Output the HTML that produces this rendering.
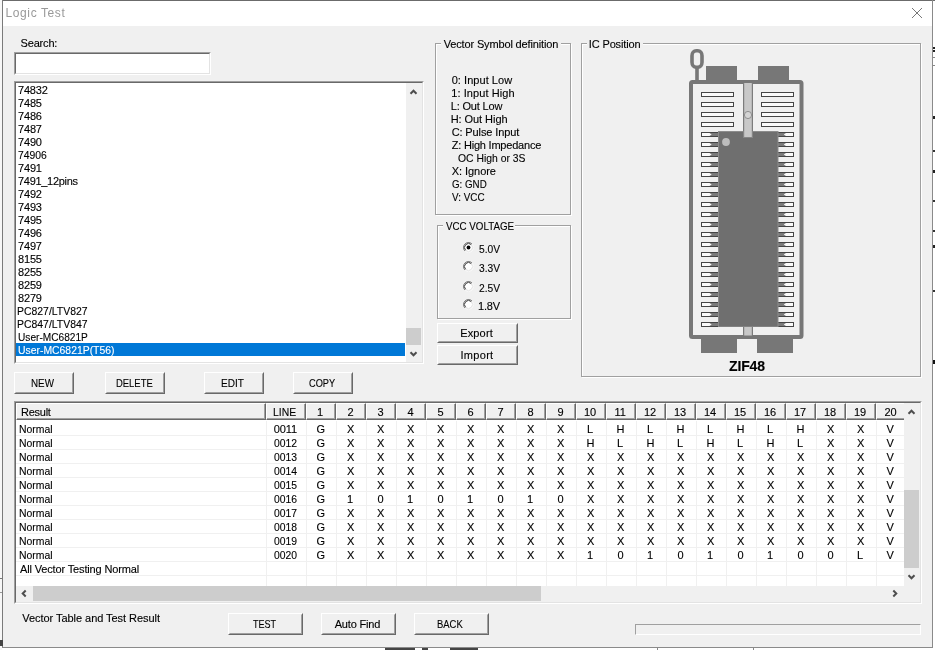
<!DOCTYPE html>
<html><head><meta charset="utf-8"><title>Logic Test</title><style>
html,body{margin:0;padding:0;}
body{width:935px;height:650px;overflow:hidden;background:#fff;position:relative;font-family:"Liberation Sans",sans-serif;font-size:11px;color:#000;-webkit-text-stroke:0.12px;}
div,span{position:absolute;box-sizing:border-box;white-space:nowrap;}
.btn{background:#f0f0f0;border-top:1px solid #fff;border-left:1px solid #fff;border-right:1px solid #696969;border-bottom:1px solid #696969;}
.btn:before{content:"";position:absolute;left:0;top:0;right:0;bottom:0;border-right:1px solid #a0a0a0;border-bottom:1px solid #a0a0a0;border-top:1px solid #f0f0f0;border-left:1px solid #f0f0f0;}
.grp{border:1px solid #a0a0a0;box-shadow:1px 1px 0 #fff, inset 1px 1px 0 #fff;}
.lbl{background:#f0f0f0;height:13px;}
.sunk{border-top:1px solid #a0a0a0;border-left:1px solid #a0a0a0;border-right:1px solid #fff;border-bottom:1px solid #fff;}
.sunk2{border-top:1px solid #696969;border-left:1px solid #696969;border-right:1px solid #e3e3e3;border-bottom:1px solid #e3e3e3;left:0;top:0;right:0;bottom:0;background:#fff;overflow:hidden;}
.hd{top:0;height:17px;background:#f0f0f0;border-top:1px solid #fff;border-left:1px solid #fff;border-right:1px solid #696969;border-bottom:1px solid #696969;box-shadow:inset -1px -1px 0 #a0a0a0;}
.gl{background:#f0f0f0;}
svg{position:absolute;}
</style></head><body><div id="root" style="left:0;top:0;width:935px;height:650px;will-change:transform;">
<div style="left:0;top:0;width:935px;height:1px;background:#6b6b6b"></div>
<div style="left:2px;top:0;width:1px;height:648px;background:#7a7a7a"></div>
<div style="left:0;top:15px;width:2px;height:1px;background:#555"></div>
<div style="left:0;top:22px;width:2px;height:1px;background:#777"></div>
<div style="left:932px;top:0;width:1px;height:648px;background:#8a8a8a"></div>
<div style="left:0;top:0;width:2px;height:650px;background:#f7f7f7"></div>
<div style="left:385px;top:648px;width:30px;height:2px;background:#444"></div>
<div style="left:422px;top:648px;width:6px;height:2px;background:#444"></div>
<div style="left:450px;top:648px;width:28px;height:2px;background:#444"></div>
<div style="left:657px;top:647px;width:1px;height:3px;background:#888"></div>
<div style="left:753px;top:647px;width:1px;height:3px;background:#888"></div>
<div style="left:0;top:640px;width:3px;height:6px;background:#444"></div>
<div style="left:0;top:578px;width:2px;height:1px;background:#777"></div>
<div style="left:0;top:592px;width:2px;height:1px;background:#999"></div>
<div style="left:933px;top:47px;width:2px;height:2px;background:#222"></div>
<div style="left:933px;top:50px;width:2px;height:2px;background:#222"></div>
<div style="left:933px;top:57px;width:2px;height:1px;background:#888"></div>
<div style="left:933px;top:65px;width:2px;height:1px;background:#888"></div>
<div style="left:933px;top:116px;width:2px;height:3px;background:#222"></div>
<div style="left:933px;top:150px;width:2px;height:2px;background:#333"></div>
<div style="left:933px;top:170px;width:2px;height:3px;background:#222"></div>
<div style="left:933px;top:200px;width:2px;height:2px;background:#333"></div>
<div style="left:933px;top:230px;width:2px;height:2px;background:#333"></div>
<div style="left:933px;top:245px;width:2px;height:3px;background:#222"></div>
<div style="left:933px;top:290px;width:2px;height:2px;background:#333"></div>
<div style="left:933px;top:360px;width:2px;height:4px;background:#111"></div>
<div style="left:3px;top:26px;width:929px;height:621px;background:#f0f0f0"></div>
<div style="left:2px;top:647px;width:931px;height:1px;background:#8a8a8a"></div>
<div style="left:5.50px;top:3px;line-height:20px;height:20px;letter-spacing:0.611px;font-size:12px;color:#999;-webkit-text-stroke:0;">Logic Test</div>
<svg style="left:911px;top:7px" width="12" height="12" viewBox="0 0 12 12"><path d="M1 1 L11 11 M11 1 L1 11" stroke="#777" stroke-width="1" fill="none"/></svg>
<div style="left:20.60px;top:33px;line-height:20px;height:20px;letter-spacing:-0.183px;">Search:</div>
<div class="sunk" style="left:14px;top:52px;width:197px;height:23px"><div class="sunk2"></div></div>
<div class="sunk" style="left:14px;top:81px;width:410px;height:283px"><div class="sunk2">
<div style="left:2.00px;top:-3px;line-height:20px;height:20px;letter-spacing:-0.200px;">74832</div>
<div style="left:2.00px;top:10px;line-height:20px;height:20px;letter-spacing:-0.167px;">7485</div>
<div style="left:2.00px;top:23px;line-height:20px;height:20px;letter-spacing:-0.167px;">7486</div>
<div style="left:2.00px;top:36px;line-height:20px;height:20px;letter-spacing:-0.167px;">7487</div>
<div style="left:2.00px;top:49px;line-height:20px;height:20px;letter-spacing:-0.167px;">7490</div>
<div style="left:2.00px;top:62px;line-height:20px;height:20px;transform:scaleX(0.9419);transform-origin:0 0;">74906</div>
<div style="left:2.00px;top:75px;line-height:20px;height:20px;letter-spacing:-0.167px;">7491</div>
<div style="left:2.00px;top:88px;line-height:20px;height:20px;letter-spacing:-0.300px;">7491_12pins</div>
<div style="left:2.00px;top:101px;line-height:20px;height:20px;letter-spacing:-0.167px;">7492</div>
<div style="left:2.00px;top:114px;line-height:20px;height:20px;letter-spacing:-0.167px;">7493</div>
<div style="left:2.00px;top:127px;line-height:20px;height:20px;letter-spacing:-0.167px;">7495</div>
<div style="left:2.00px;top:140px;line-height:20px;height:20px;letter-spacing:-0.167px;">7496</div>
<div style="left:2.00px;top:153px;line-height:20px;height:20px;letter-spacing:-0.167px;">7497</div>
<div style="left:2.00px;top:166px;line-height:20px;height:20px;letter-spacing:-0.167px;">8155</div>
<div style="left:2.00px;top:179px;line-height:20px;height:20px;letter-spacing:-0.167px;">8255</div>
<div style="left:2.00px;top:192px;line-height:20px;height:20px;letter-spacing:-0.167px;">8259</div>
<div style="left:2.00px;top:205px;line-height:20px;height:20px;letter-spacing:-0.167px;">8279</div>
<div style="left:1.05px;top:218px;line-height:20px;height:20px;transform:scaleX(0.9479);transform-origin:0 0;">PC827/LTV827</div>
<div style="left:1.05px;top:231px;line-height:20px;height:20px;transform:scaleX(0.9479);transform-origin:0 0;">PC847/LTV847</div>
<div style="left:2.00px;top:244px;line-height:20px;height:20px;transform:scaleX(0.9211);transform-origin:0 0;">User-MC6821P</div>
<div style="left:0;top:260px;width:389px;height:13px;background:#0078d7"></div>
<div style="left:2.00px;top:257px;line-height:20px;height:20px;transform:scaleX(0.9451);transform-origin:0 0;color:#fff;">User-MC6821P(T56)</div>
<div style="left:390px;top:0;width:17px;height:280px;background:#f0f0f0"></div>
<div style="left:390px;top:245px;width:15px;height:17px;background:#cdcdcd"></div>
<svg style="left:393px;top:5px" width="9" height="7" viewBox="0 0 9 7"><path d="M1.5 5.7 L4.5 2.7 L7.5 5.7" stroke="#4d4d4d" stroke-width="2" fill="none"/></svg>
<svg style="left:393px;top:268px" width="9" height="7" viewBox="0 0 9 7"><path d="M1.5 1.3 L4.5 4.3 L7.5 1.3" stroke="#4d4d4d" stroke-width="2" fill="none"/></svg>
</div></div>
<div class="btn" style="left:14px;top:372px;width:60px;height:22px"></div>
<div style="left:30.71px;top:373px;line-height:20px;height:20px;transform:scaleX(0.8920);transform-origin:0 0;">NEW</div>
<div class="btn" style="left:105px;top:372px;width:60px;height:22px"></div>
<div style="left:115.64px;top:373px;line-height:20px;height:20px;transform:scaleX(0.8571);transform-origin:0 0;">DELETE</div>
<div class="btn" style="left:204px;top:372px;width:60px;height:22px"></div>
<div style="left:220.69px;top:373px;line-height:20px;height:20px;transform:scaleX(0.9125);transform-origin:0 0;">EDIT</div>
<div class="btn" style="left:293px;top:372px;width:60px;height:22px"></div>
<div style="left:308.60px;top:373px;line-height:20px;height:20px;transform:scaleX(0.8387);transform-origin:0 0;">COPY</div>
<div class="btn" style="left:437px;top:323px;width:81px;height:20px"></div>
<div style="left:460.20px;top:323px;line-height:20px;height:20px;letter-spacing:0.160px;">Export</div>
<div class="btn" style="left:437px;top:345px;width:81px;height:20px"></div>
<div style="left:460.50px;top:345px;line-height:20px;height:20px;letter-spacing:0.300px;">Import</div>
<div class="btn" style="left:228px;top:613px;width:75px;height:22px"></div>
<div style="left:253.00px;top:614px;line-height:20px;height:20px;transform:scaleX(0.8214);transform-origin:0 0;">TEST</div>
<div class="btn" style="left:321px;top:613px;width:75px;height:22px"></div>
<div style="left:334.70px;top:614px;line-height:20px;height:20px;letter-spacing:-0.188px;">Auto Find</div>
<div class="btn" style="left:414px;top:613px;width:75px;height:22px"></div>
<div style="left:436.84px;top:614px;line-height:20px;height:20px;transform:scaleX(0.8586);transform-origin:0 0;">BACK</div>
<div class="grp" style="left:435px;top:43px;width:136px;height:172px"></div>
<div class="lbl" style="left:441px;top:37px;width:120px"></div>
<div style="left:443.70px;top:34px;line-height:20px;height:20px;letter-spacing:-0.148px;">Vector Symbol definition</div>
<div style="left:451.70px;top:70px;line-height:20px;height:20px;letter-spacing:0.045px;">0: Input Low</div>
<div style="left:451.20px;top:83px;line-height:20px;height:20px;letter-spacing:0.083px;">1: Input High</div>
<div style="left:450.70px;top:96px;line-height:20px;height:20px;letter-spacing:-0.167px;">L: Out Low</div>
<div style="left:450.70px;top:109px;line-height:20px;height:20px;letter-spacing:-0.060px;">H: Out High</div>
<div style="left:451.70px;top:122px;line-height:20px;height:20px;letter-spacing:-0.123px;">C: Pulse Input</div>
<div style="left:451.70px;top:135px;line-height:20px;height:20px;letter-spacing:-0.206px;">Z: High Impedance</div>
<div style="left:457.50px;top:148px;line-height:20px;height:20px;transform:scaleX(0.9437);transform-origin:0 0;">OC High or 3S</div>
<div style="left:451.70px;top:161px;line-height:20px;height:20px;letter-spacing:-0.050px;">X: Ignore</div>
<div style="left:451.70px;top:174px;line-height:20px;height:20px;transform:scaleX(0.8872);transform-origin:0 0;">G: GND</div>
<div style="left:451.70px;top:187px;line-height:20px;height:20px;transform:scaleX(0.8972);transform-origin:0 0;">V: VCC</div>
<div class="grp" style="left:437px;top:225px;width:134px;height:94px"></div>
<div class="lbl" style="left:443px;top:219px;width:72px"></div>
<div style="left:445.50px;top:216px;line-height:20px;height:20px;transform:scaleX(0.8882);transform-origin:0 0;">VCC VOLTAGE</div>
<svg style="left:461.8px;top:241.0px" width="13" height="13" viewBox="0 0 13 13"><circle cx="6.5" cy="6.5" r="4.6" fill="#fff"/><path d="M2.96 10.04 A5 5 0 0 1 10.04 2.96" stroke="#7a7a7a" stroke-width="1" fill="none"/><path d="M10.04 2.96 A5 5 0 0 1 2.96 10.04" stroke="#f8f8f8" stroke-width="1" fill="none"/><path d="M3.67 9.33 A4 4 0 0 1 9.33 3.67" stroke="#3c3c3c" stroke-width="1" fill="none"/><path d="M9.33 3.67 A4 4 0 0 1 3.67 9.33" stroke="#e3e3e3" stroke-width="1" fill="none"/><circle cx="6.5" cy="6.5" r="1.9" fill="#000"/></svg>
<div style="left:479.00px;top:239px;line-height:20px;height:20px;transform:scaleX(0.9304);transform-origin:0 0;">5.0V</div>
<svg style="left:461.8px;top:260.0px" width="13" height="13" viewBox="0 0 13 13"><circle cx="6.5" cy="6.5" r="4.6" fill="#fff"/><path d="M2.96 10.04 A5 5 0 0 1 10.04 2.96" stroke="#7a7a7a" stroke-width="1" fill="none"/><path d="M10.04 2.96 A5 5 0 0 1 2.96 10.04" stroke="#f8f8f8" stroke-width="1" fill="none"/><path d="M3.67 9.33 A4 4 0 0 1 9.33 3.67" stroke="#3c3c3c" stroke-width="1" fill="none"/><path d="M9.33 3.67 A4 4 0 0 1 3.67 9.33" stroke="#e3e3e3" stroke-width="1" fill="none"/></svg>
<div style="left:479.00px;top:258px;line-height:20px;height:20px;transform:scaleX(0.9304);transform-origin:0 0;">3.3V</div>
<svg style="left:461.8px;top:280.0px" width="13" height="13" viewBox="0 0 13 13"><circle cx="6.5" cy="6.5" r="4.6" fill="#fff"/><path d="M2.96 10.04 A5 5 0 0 1 10.04 2.96" stroke="#7a7a7a" stroke-width="1" fill="none"/><path d="M10.04 2.96 A5 5 0 0 1 2.96 10.04" stroke="#f8f8f8" stroke-width="1" fill="none"/><path d="M3.67 9.33 A4 4 0 0 1 9.33 3.67" stroke="#3c3c3c" stroke-width="1" fill="none"/><path d="M9.33 3.67 A4 4 0 0 1 3.67 9.33" stroke="#e3e3e3" stroke-width="1" fill="none"/></svg>
<div style="left:479.00px;top:278px;line-height:20px;height:20px;transform:scaleX(0.9304);transform-origin:0 0;">2.5V</div>
<svg style="left:461.8px;top:297.5px" width="13" height="13" viewBox="0 0 13 13"><circle cx="6.5" cy="6.5" r="4.6" fill="#fff"/><path d="M2.96 10.04 A5 5 0 0 1 10.04 2.96" stroke="#7a7a7a" stroke-width="1" fill="none"/><path d="M10.04 2.96 A5 5 0 0 1 2.96 10.04" stroke="#f8f8f8" stroke-width="1" fill="none"/><path d="M3.67 9.33 A4 4 0 0 1 9.33 3.67" stroke="#3c3c3c" stroke-width="1" fill="none"/><path d="M9.33 3.67 A4 4 0 0 1 3.67 9.33" stroke="#e3e3e3" stroke-width="1" fill="none"/></svg>
<div style="left:478.00px;top:296px;line-height:20px;height:20px;letter-spacing:-0.200px;">1.8V</div>
<div class="grp" style="left:581px;top:43px;width:340px;height:334px"></div>
<div class="lbl" style="left:587px;top:37px;width:56px"></div>
<div style="left:588.80px;top:34px;line-height:20px;height:20px;letter-spacing:-0.140px;">IC Position</div>
<svg style="left:680px;top:44px" width="140" height="330" viewBox="680 44 140 330"><rect x="692" y="50.7" width="10" height="16.6" rx="4.2" ry="5" fill="none" stroke="#777777" stroke-width="3.6"/><rect x="695.2" y="67" width="3.6" height="14" fill="#777777"/><rect x="706" y="66" width="31" height="15" fill="#777777"/><rect x="758" y="66" width="31" height="15" fill="#777777"/><rect x="691" y="82" width="110.5" height="255" rx="1.5" fill="#f0f0f0" stroke="#777777" stroke-width="4"/><rect x="701" y="338" width="36" height="15" fill="#777777"/><rect x="757" y="338" width="36" height="15" fill="#777777"/><rect x="743" y="83" width="10" height="55" fill="#7c7c7c"/><rect x="744.2" y="83" width="7.6" height="54" fill="#c8c8c8"/><rect x="743" y="326" width="10" height="9.5" fill="#7c7c7c"/><rect x="744.2" y="326" width="7.6" height="9.5" fill="#c8c8c8"/><circle cx="748" cy="115" r="3.6" fill="#d4d4d4" stroke="#888" stroke-width="0.9"/><rect x="701.5" y="92.5" width="32" height="4" fill="#fafafa" stroke="#454545" stroke-width="1"/><rect x="761.5" y="92.5" width="32" height="4" fill="#fafafa" stroke="#454545" stroke-width="1"/><rect x="701.5" y="102.5" width="32" height="4" fill="#fafafa" stroke="#454545" stroke-width="1"/><rect x="761.5" y="102.5" width="32" height="4" fill="#fafafa" stroke="#454545" stroke-width="1"/><rect x="701.5" y="112.5" width="32" height="4" fill="#fafafa" stroke="#454545" stroke-width="1"/><rect x="761.5" y="112.5" width="32" height="4" fill="#fafafa" stroke="#454545" stroke-width="1"/><rect x="701.5" y="122.5" width="32" height="4" fill="#fafafa" stroke="#454545" stroke-width="1"/><rect x="761.5" y="122.5" width="32" height="4" fill="#fafafa" stroke="#454545" stroke-width="1"/><rect x="701.5" y="132.5" width="32" height="4" fill="#fafafa" stroke="#454545" stroke-width="1"/><rect x="761.5" y="132.5" width="32" height="4" fill="#fafafa" stroke="#454545" stroke-width="1"/><path d="M719 133.0 L709.5 133.0 L711.7 134.5 L709.5 136.0 L719 136.0 Z" fill="#7a7a7a"/><path d="M777 133.0 L786 133.0 L783.8 134.5 L786 136.0 L777 136.0 Z" fill="#7a7a7a"/><rect x="701.5" y="142.5" width="32" height="4" fill="#fafafa" stroke="#454545" stroke-width="1"/><rect x="761.5" y="142.5" width="32" height="4" fill="#fafafa" stroke="#454545" stroke-width="1"/><path d="M719 143.0 L709.5 143.0 L711.7 144.5 L709.5 146.0 L719 146.0 Z" fill="#7a7a7a"/><path d="M777 143.0 L786 143.0 L783.8 144.5 L786 146.0 L777 146.0 Z" fill="#7a7a7a"/><rect x="701.5" y="152.5" width="32" height="4" fill="#fafafa" stroke="#454545" stroke-width="1"/><rect x="761.5" y="152.5" width="32" height="4" fill="#fafafa" stroke="#454545" stroke-width="1"/><path d="M719 153.0 L709.5 153.0 L711.7 154.5 L709.5 156.0 L719 156.0 Z" fill="#7a7a7a"/><path d="M777 153.0 L786 153.0 L783.8 154.5 L786 156.0 L777 156.0 Z" fill="#7a7a7a"/><rect x="701.5" y="162.5" width="32" height="4" fill="#fafafa" stroke="#454545" stroke-width="1"/><rect x="761.5" y="162.5" width="32" height="4" fill="#fafafa" stroke="#454545" stroke-width="1"/><path d="M719 163.0 L709.5 163.0 L711.7 164.5 L709.5 166.0 L719 166.0 Z" fill="#7a7a7a"/><path d="M777 163.0 L786 163.0 L783.8 164.5 L786 166.0 L777 166.0 Z" fill="#7a7a7a"/><rect x="701.5" y="172.5" width="32" height="4" fill="#fafafa" stroke="#454545" stroke-width="1"/><rect x="761.5" y="172.5" width="32" height="4" fill="#fafafa" stroke="#454545" stroke-width="1"/><path d="M719 173.0 L709.5 173.0 L711.7 174.5 L709.5 176.0 L719 176.0 Z" fill="#7a7a7a"/><path d="M777 173.0 L786 173.0 L783.8 174.5 L786 176.0 L777 176.0 Z" fill="#7a7a7a"/><rect x="701.5" y="182.5" width="32" height="4" fill="#fafafa" stroke="#454545" stroke-width="1"/><rect x="761.5" y="182.5" width="32" height="4" fill="#fafafa" stroke="#454545" stroke-width="1"/><path d="M719 183.0 L709.5 183.0 L711.7 184.5 L709.5 186.0 L719 186.0 Z" fill="#7a7a7a"/><path d="M777 183.0 L786 183.0 L783.8 184.5 L786 186.0 L777 186.0 Z" fill="#7a7a7a"/><rect x="701.5" y="192.5" width="32" height="4" fill="#fafafa" stroke="#454545" stroke-width="1"/><rect x="761.5" y="192.5" width="32" height="4" fill="#fafafa" stroke="#454545" stroke-width="1"/><path d="M719 193.0 L709.5 193.0 L711.7 194.5 L709.5 196.0 L719 196.0 Z" fill="#7a7a7a"/><path d="M777 193.0 L786 193.0 L783.8 194.5 L786 196.0 L777 196.0 Z" fill="#7a7a7a"/><rect x="701.5" y="202.5" width="32" height="4" fill="#fafafa" stroke="#454545" stroke-width="1"/><rect x="761.5" y="202.5" width="32" height="4" fill="#fafafa" stroke="#454545" stroke-width="1"/><path d="M719 203.0 L709.5 203.0 L711.7 204.5 L709.5 206.0 L719 206.0 Z" fill="#7a7a7a"/><path d="M777 203.0 L786 203.0 L783.8 204.5 L786 206.0 L777 206.0 Z" fill="#7a7a7a"/><rect x="701.5" y="212.5" width="32" height="4" fill="#fafafa" stroke="#454545" stroke-width="1"/><rect x="761.5" y="212.5" width="32" height="4" fill="#fafafa" stroke="#454545" stroke-width="1"/><path d="M719 213.0 L709.5 213.0 L711.7 214.5 L709.5 216.0 L719 216.0 Z" fill="#7a7a7a"/><path d="M777 213.0 L786 213.0 L783.8 214.5 L786 216.0 L777 216.0 Z" fill="#7a7a7a"/><rect x="701.5" y="222.5" width="32" height="4" fill="#fafafa" stroke="#454545" stroke-width="1"/><rect x="761.5" y="222.5" width="32" height="4" fill="#fafafa" stroke="#454545" stroke-width="1"/><path d="M719 223.0 L709.5 223.0 L711.7 224.5 L709.5 226.0 L719 226.0 Z" fill="#7a7a7a"/><path d="M777 223.0 L786 223.0 L783.8 224.5 L786 226.0 L777 226.0 Z" fill="#7a7a7a"/><rect x="701.5" y="232.5" width="32" height="4" fill="#fafafa" stroke="#454545" stroke-width="1"/><rect x="761.5" y="232.5" width="32" height="4" fill="#fafafa" stroke="#454545" stroke-width="1"/><path d="M719 233.0 L709.5 233.0 L711.7 234.5 L709.5 236.0 L719 236.0 Z" fill="#7a7a7a"/><path d="M777 233.0 L786 233.0 L783.8 234.5 L786 236.0 L777 236.0 Z" fill="#7a7a7a"/><rect x="701.5" y="242.5" width="32" height="4" fill="#fafafa" stroke="#454545" stroke-width="1"/><rect x="761.5" y="242.5" width="32" height="4" fill="#fafafa" stroke="#454545" stroke-width="1"/><path d="M719 243.0 L709.5 243.0 L711.7 244.5 L709.5 246.0 L719 246.0 Z" fill="#7a7a7a"/><path d="M777 243.0 L786 243.0 L783.8 244.5 L786 246.0 L777 246.0 Z" fill="#7a7a7a"/><rect x="701.5" y="252.5" width="32" height="4" fill="#fafafa" stroke="#454545" stroke-width="1"/><rect x="761.5" y="252.5" width="32" height="4" fill="#fafafa" stroke="#454545" stroke-width="1"/><path d="M719 253.0 L709.5 253.0 L711.7 254.5 L709.5 256.0 L719 256.0 Z" fill="#7a7a7a"/><path d="M777 253.0 L786 253.0 L783.8 254.5 L786 256.0 L777 256.0 Z" fill="#7a7a7a"/><rect x="701.5" y="262.5" width="32" height="4" fill="#fafafa" stroke="#454545" stroke-width="1"/><rect x="761.5" y="262.5" width="32" height="4" fill="#fafafa" stroke="#454545" stroke-width="1"/><path d="M719 263.0 L709.5 263.0 L711.7 264.5 L709.5 266.0 L719 266.0 Z" fill="#7a7a7a"/><path d="M777 263.0 L786 263.0 L783.8 264.5 L786 266.0 L777 266.0 Z" fill="#7a7a7a"/><rect x="701.5" y="272.5" width="32" height="4" fill="#fafafa" stroke="#454545" stroke-width="1"/><rect x="761.5" y="272.5" width="32" height="4" fill="#fafafa" stroke="#454545" stroke-width="1"/><path d="M719 273.0 L709.5 273.0 L711.7 274.5 L709.5 276.0 L719 276.0 Z" fill="#7a7a7a"/><path d="M777 273.0 L786 273.0 L783.8 274.5 L786 276.0 L777 276.0 Z" fill="#7a7a7a"/><rect x="701.5" y="282.5" width="32" height="4" fill="#fafafa" stroke="#454545" stroke-width="1"/><rect x="761.5" y="282.5" width="32" height="4" fill="#fafafa" stroke="#454545" stroke-width="1"/><path d="M719 283.0 L709.5 283.0 L711.7 284.5 L709.5 286.0 L719 286.0 Z" fill="#7a7a7a"/><path d="M777 283.0 L786 283.0 L783.8 284.5 L786 286.0 L777 286.0 Z" fill="#7a7a7a"/><rect x="701.5" y="292.5" width="32" height="4" fill="#fafafa" stroke="#454545" stroke-width="1"/><rect x="761.5" y="292.5" width="32" height="4" fill="#fafafa" stroke="#454545" stroke-width="1"/><path d="M719 293.0 L709.5 293.0 L711.7 294.5 L709.5 296.0 L719 296.0 Z" fill="#7a7a7a"/><path d="M777 293.0 L786 293.0 L783.8 294.5 L786 296.0 L777 296.0 Z" fill="#7a7a7a"/><rect x="701.5" y="302.5" width="32" height="4" fill="#fafafa" stroke="#454545" stroke-width="1"/><rect x="761.5" y="302.5" width="32" height="4" fill="#fafafa" stroke="#454545" stroke-width="1"/><path d="M719 303.0 L709.5 303.0 L711.7 304.5 L709.5 306.0 L719 306.0 Z" fill="#7a7a7a"/><path d="M777 303.0 L786 303.0 L783.8 304.5 L786 306.0 L777 306.0 Z" fill="#7a7a7a"/><rect x="701.5" y="312.5" width="32" height="4" fill="#fafafa" stroke="#454545" stroke-width="1"/><rect x="761.5" y="312.5" width="32" height="4" fill="#fafafa" stroke="#454545" stroke-width="1"/><path d="M719 313.0 L709.5 313.0 L711.7 314.5 L709.5 316.0 L719 316.0 Z" fill="#7a7a7a"/><path d="M777 313.0 L786 313.0 L783.8 314.5 L786 316.0 L777 316.0 Z" fill="#7a7a7a"/><rect x="701.5" y="322.5" width="32" height="4" fill="#fafafa" stroke="#454545" stroke-width="1"/><rect x="761.5" y="322.5" width="32" height="4" fill="#fafafa" stroke="#454545" stroke-width="1"/><path d="M719 323.0 L709.5 323.0 L711.7 324.5 L709.5 326.0 L719 326.0 Z" fill="#7a7a7a"/><path d="M777 323.0 L786 323.0 L783.8 324.5 L786 326.0 L777 326.0 Z" fill="#7a7a7a"/><rect x="718" y="131" width="60.5" height="196" fill="#8c8c8c"/><rect x="719" y="132" width="58.5" height="194.3" fill="#6f6f6f"/><rect x="743" y="131" width="10" height="7" fill="#868686"/><rect x="744.2" y="131" width="7.6" height="6" fill="#c8c8c8"/><circle cx="726" cy="142" r="3.9" fill="#bdbdbd"/></svg>
<div style="left:729.00px;top:356px;line-height:20px;height:20px;letter-spacing:-0.125px;font-size:14px;font-weight:bold;">ZIF48</div>
<div class="sunk" style="left:14px;top:401px;width:908px;height:203px"><div class="sunk2">
<div class="gl" style="left:0;top:32px;width:888px;height:1px"></div>
<div class="gl" style="left:0;top:46px;width:888px;height:1px"></div>
<div class="gl" style="left:0;top:60px;width:888px;height:1px"></div>
<div class="gl" style="left:0;top:74px;width:888px;height:1px"></div>
<div class="gl" style="left:0;top:88px;width:888px;height:1px"></div>
<div class="gl" style="left:0;top:102px;width:888px;height:1px"></div>
<div class="gl" style="left:0;top:116px;width:888px;height:1px"></div>
<div class="gl" style="left:0;top:130px;width:888px;height:1px"></div>
<div class="gl" style="left:0;top:144px;width:888px;height:1px"></div>
<div class="gl" style="left:0;top:158px;width:888px;height:1px"></div>
<div class="gl" style="left:0;top:172px;width:888px;height:1px"></div>
<div class="gl" style="left:250px;top:18px;width:1px;height:165px"></div>
<div class="gl" style="left:290px;top:18px;width:1px;height:165px"></div>
<div class="gl" style="left:320px;top:18px;width:1px;height:165px"></div>
<div class="gl" style="left:350px;top:18px;width:1px;height:165px"></div>
<div class="gl" style="left:380px;top:18px;width:1px;height:165px"></div>
<div class="gl" style="left:410px;top:18px;width:1px;height:165px"></div>
<div class="gl" style="left:440px;top:18px;width:1px;height:165px"></div>
<div class="gl" style="left:470px;top:18px;width:1px;height:165px"></div>
<div class="gl" style="left:500px;top:18px;width:1px;height:165px"></div>
<div class="gl" style="left:530px;top:18px;width:1px;height:165px"></div>
<div class="gl" style="left:560px;top:18px;width:1px;height:165px"></div>
<div class="gl" style="left:590px;top:18px;width:1px;height:165px"></div>
<div class="gl" style="left:620px;top:18px;width:1px;height:165px"></div>
<div class="gl" style="left:650px;top:18px;width:1px;height:165px"></div>
<div class="gl" style="left:680px;top:18px;width:1px;height:165px"></div>
<div class="gl" style="left:710px;top:18px;width:1px;height:165px"></div>
<div class="gl" style="left:740px;top:18px;width:1px;height:165px"></div>
<div class="gl" style="left:770px;top:18px;width:1px;height:165px"></div>
<div class="gl" style="left:800px;top:18px;width:1px;height:165px"></div>
<div class="gl" style="left:830px;top:18px;width:1px;height:165px"></div>
<div class="gl" style="left:860px;top:18px;width:1px;height:165px"></div>
<div class="gl" style="left:890px;top:18px;width:1px;height:165px"></div>
<div class="hd" style="left:0px;width:250px"></div>
<div style="left:5.00px;top:-1px;line-height:20px;height:20px;letter-spacing:-0.260px;">Result</div>
<div class="hd" style="left:250px;width:40px"></div>
<div style="left:257.26px;top:-1px;line-height:20px;height:20px;transform:scaleX(0.9435);transform-origin:0 0;">LINE</div>
<div class="hd" style="left:290px;width:30px"></div>
<div style="left:301.00px;top:-1px;line-height:20px;height:20px;">1</div>
<div class="hd" style="left:320px;width:30px"></div>
<div style="left:331.50px;top:-1px;line-height:20px;height:20px;">2</div>
<div class="hd" style="left:350px;width:30px"></div>
<div style="left:361.50px;top:-1px;line-height:20px;height:20px;">3</div>
<div class="hd" style="left:380px;width:30px"></div>
<div style="left:391.50px;top:-1px;line-height:20px;height:20px;">4</div>
<div class="hd" style="left:410px;width:30px"></div>
<div style="left:421.50px;top:-1px;line-height:20px;height:20px;">5</div>
<div class="hd" style="left:440px;width:30px"></div>
<div style="left:451.50px;top:-1px;line-height:20px;height:20px;">6</div>
<div class="hd" style="left:470px;width:30px"></div>
<div style="left:481.50px;top:-1px;line-height:20px;height:20px;">7</div>
<div class="hd" style="left:500px;width:30px"></div>
<div style="left:511.50px;top:-1px;line-height:20px;height:20px;">8</div>
<div class="hd" style="left:530px;width:30px"></div>
<div style="left:541.50px;top:-1px;line-height:20px;height:20px;">9</div>
<div class="hd" style="left:560px;width:30px"></div>
<div style="left:568.00px;top:-1px;line-height:20px;height:20px;">10</div>
<div class="hd" style="left:590px;width:30px"></div>
<div style="left:598.50px;top:-1px;line-height:20px;height:20px;">11</div>
<div class="hd" style="left:620px;width:30px"></div>
<div style="left:628.00px;top:-1px;line-height:20px;height:20px;">12</div>
<div class="hd" style="left:650px;width:30px"></div>
<div style="left:658.00px;top:-1px;line-height:20px;height:20px;">13</div>
<div class="hd" style="left:680px;width:30px"></div>
<div style="left:688.00px;top:-1px;line-height:20px;height:20px;">14</div>
<div class="hd" style="left:710px;width:30px"></div>
<div style="left:718.00px;top:-1px;line-height:20px;height:20px;">15</div>
<div class="hd" style="left:740px;width:30px"></div>
<div style="left:748.00px;top:-1px;line-height:20px;height:20px;">16</div>
<div class="hd" style="left:770px;width:30px"></div>
<div style="left:778.00px;top:-1px;line-height:20px;height:20px;">17</div>
<div class="hd" style="left:800px;width:30px"></div>
<div style="left:808.00px;top:-1px;line-height:20px;height:20px;">18</div>
<div class="hd" style="left:830px;width:30px"></div>
<div style="left:838.00px;top:-1px;line-height:20px;height:20px;">19</div>
<div class="hd" style="left:860px;width:30px"></div>
<div style="left:868.50px;top:-1px;line-height:20px;height:20px;">20</div>
<div style="left:3.05px;top:16px;line-height:20px;height:20px;transform:scaleX(0.9471);transform-origin:0 0;">Normal</div>
<div style="left:257.80px;top:16px;line-height:20px;height:20px;letter-spacing:-0.133px;">0011</div>
<div style="left:300.50px;top:16px;line-height:20px;height:20px;">G</div>
<div style="left:331.00px;top:16px;line-height:20px;height:20px;">X</div>
<div style="left:361.00px;top:16px;line-height:20px;height:20px;">X</div>
<div style="left:391.00px;top:16px;line-height:20px;height:20px;">X</div>
<div style="left:421.00px;top:16px;line-height:20px;height:20px;">X</div>
<div style="left:451.00px;top:16px;line-height:20px;height:20px;">X</div>
<div style="left:481.00px;top:16px;line-height:20px;height:20px;">X</div>
<div style="left:511.00px;top:16px;line-height:20px;height:20px;">X</div>
<div style="left:541.00px;top:16px;line-height:20px;height:20px;">X</div>
<div style="left:571.00px;top:16px;line-height:20px;height:20px;">L</div>
<div style="left:600.50px;top:16px;line-height:20px;height:20px;">H</div>
<div style="left:631.00px;top:16px;line-height:20px;height:20px;">L</div>
<div style="left:660.50px;top:16px;line-height:20px;height:20px;">H</div>
<div style="left:691.00px;top:16px;line-height:20px;height:20px;">L</div>
<div style="left:720.50px;top:16px;line-height:20px;height:20px;">H</div>
<div style="left:751.00px;top:16px;line-height:20px;height:20px;">L</div>
<div style="left:780.50px;top:16px;line-height:20px;height:20px;">H</div>
<div style="left:811.00px;top:16px;line-height:20px;height:20px;">X</div>
<div style="left:841.00px;top:16px;line-height:20px;height:20px;">X</div>
<div style="left:870.50px;top:16px;line-height:20px;height:20px;">V</div>
<div style="left:3.05px;top:30px;line-height:20px;height:20px;transform:scaleX(0.9471);transform-origin:0 0;">Normal</div>
<div style="left:257.80px;top:30px;line-height:20px;height:20px;transform:scaleX(0.9417);transform-origin:0 0;">0012</div>
<div style="left:300.50px;top:30px;line-height:20px;height:20px;">G</div>
<div style="left:331.00px;top:30px;line-height:20px;height:20px;">X</div>
<div style="left:361.00px;top:30px;line-height:20px;height:20px;">X</div>
<div style="left:391.00px;top:30px;line-height:20px;height:20px;">X</div>
<div style="left:421.00px;top:30px;line-height:20px;height:20px;">X</div>
<div style="left:451.00px;top:30px;line-height:20px;height:20px;">X</div>
<div style="left:481.00px;top:30px;line-height:20px;height:20px;">X</div>
<div style="left:511.00px;top:30px;line-height:20px;height:20px;">X</div>
<div style="left:541.00px;top:30px;line-height:20px;height:20px;">X</div>
<div style="left:570.50px;top:30px;line-height:20px;height:20px;">H</div>
<div style="left:601.00px;top:30px;line-height:20px;height:20px;">L</div>
<div style="left:630.50px;top:30px;line-height:20px;height:20px;">H</div>
<div style="left:661.00px;top:30px;line-height:20px;height:20px;">L</div>
<div style="left:690.50px;top:30px;line-height:20px;height:20px;">H</div>
<div style="left:721.00px;top:30px;line-height:20px;height:20px;">L</div>
<div style="left:750.50px;top:30px;line-height:20px;height:20px;">H</div>
<div style="left:781.00px;top:30px;line-height:20px;height:20px;">L</div>
<div style="left:811.00px;top:30px;line-height:20px;height:20px;">X</div>
<div style="left:841.00px;top:30px;line-height:20px;height:20px;">X</div>
<div style="left:870.50px;top:30px;line-height:20px;height:20px;">V</div>
<div style="left:3.05px;top:44px;line-height:20px;height:20px;transform:scaleX(0.9471);transform-origin:0 0;">Normal</div>
<div style="left:257.80px;top:44px;line-height:20px;height:20px;transform:scaleX(0.9417);transform-origin:0 0;">0013</div>
<div style="left:300.50px;top:44px;line-height:20px;height:20px;">G</div>
<div style="left:331.00px;top:44px;line-height:20px;height:20px;">X</div>
<div style="left:361.00px;top:44px;line-height:20px;height:20px;">X</div>
<div style="left:391.00px;top:44px;line-height:20px;height:20px;">X</div>
<div style="left:421.00px;top:44px;line-height:20px;height:20px;">X</div>
<div style="left:451.00px;top:44px;line-height:20px;height:20px;">X</div>
<div style="left:481.00px;top:44px;line-height:20px;height:20px;">X</div>
<div style="left:511.00px;top:44px;line-height:20px;height:20px;">X</div>
<div style="left:541.00px;top:44px;line-height:20px;height:20px;">X</div>
<div style="left:571.00px;top:44px;line-height:20px;height:20px;">X</div>
<div style="left:601.00px;top:44px;line-height:20px;height:20px;">X</div>
<div style="left:631.00px;top:44px;line-height:20px;height:20px;">X</div>
<div style="left:661.00px;top:44px;line-height:20px;height:20px;">X</div>
<div style="left:691.00px;top:44px;line-height:20px;height:20px;">X</div>
<div style="left:721.00px;top:44px;line-height:20px;height:20px;">X</div>
<div style="left:751.00px;top:44px;line-height:20px;height:20px;">X</div>
<div style="left:781.00px;top:44px;line-height:20px;height:20px;">X</div>
<div style="left:811.00px;top:44px;line-height:20px;height:20px;">X</div>
<div style="left:841.00px;top:44px;line-height:20px;height:20px;">X</div>
<div style="left:870.50px;top:44px;line-height:20px;height:20px;">V</div>
<div style="left:3.05px;top:58px;line-height:20px;height:20px;transform:scaleX(0.9471);transform-origin:0 0;">Normal</div>
<div style="left:257.80px;top:58px;line-height:20px;height:20px;transform:scaleX(0.9417);transform-origin:0 0;">0014</div>
<div style="left:300.50px;top:58px;line-height:20px;height:20px;">G</div>
<div style="left:331.00px;top:58px;line-height:20px;height:20px;">X</div>
<div style="left:361.00px;top:58px;line-height:20px;height:20px;">X</div>
<div style="left:391.00px;top:58px;line-height:20px;height:20px;">X</div>
<div style="left:421.00px;top:58px;line-height:20px;height:20px;">X</div>
<div style="left:451.00px;top:58px;line-height:20px;height:20px;">X</div>
<div style="left:481.00px;top:58px;line-height:20px;height:20px;">X</div>
<div style="left:511.00px;top:58px;line-height:20px;height:20px;">X</div>
<div style="left:541.00px;top:58px;line-height:20px;height:20px;">X</div>
<div style="left:571.00px;top:58px;line-height:20px;height:20px;">X</div>
<div style="left:601.00px;top:58px;line-height:20px;height:20px;">X</div>
<div style="left:631.00px;top:58px;line-height:20px;height:20px;">X</div>
<div style="left:661.00px;top:58px;line-height:20px;height:20px;">X</div>
<div style="left:691.00px;top:58px;line-height:20px;height:20px;">X</div>
<div style="left:721.00px;top:58px;line-height:20px;height:20px;">X</div>
<div style="left:751.00px;top:58px;line-height:20px;height:20px;">X</div>
<div style="left:781.00px;top:58px;line-height:20px;height:20px;">X</div>
<div style="left:811.00px;top:58px;line-height:20px;height:20px;">X</div>
<div style="left:841.00px;top:58px;line-height:20px;height:20px;">X</div>
<div style="left:870.50px;top:58px;line-height:20px;height:20px;">V</div>
<div style="left:3.05px;top:72px;line-height:20px;height:20px;transform:scaleX(0.9471);transform-origin:0 0;">Normal</div>
<div style="left:257.80px;top:72px;line-height:20px;height:20px;transform:scaleX(0.9417);transform-origin:0 0;">0015</div>
<div style="left:300.50px;top:72px;line-height:20px;height:20px;">G</div>
<div style="left:331.00px;top:72px;line-height:20px;height:20px;">X</div>
<div style="left:361.00px;top:72px;line-height:20px;height:20px;">X</div>
<div style="left:391.00px;top:72px;line-height:20px;height:20px;">X</div>
<div style="left:421.00px;top:72px;line-height:20px;height:20px;">X</div>
<div style="left:451.00px;top:72px;line-height:20px;height:20px;">X</div>
<div style="left:481.00px;top:72px;line-height:20px;height:20px;">X</div>
<div style="left:511.00px;top:72px;line-height:20px;height:20px;">X</div>
<div style="left:541.00px;top:72px;line-height:20px;height:20px;">X</div>
<div style="left:571.00px;top:72px;line-height:20px;height:20px;">X</div>
<div style="left:601.00px;top:72px;line-height:20px;height:20px;">X</div>
<div style="left:631.00px;top:72px;line-height:20px;height:20px;">X</div>
<div style="left:661.00px;top:72px;line-height:20px;height:20px;">X</div>
<div style="left:691.00px;top:72px;line-height:20px;height:20px;">X</div>
<div style="left:721.00px;top:72px;line-height:20px;height:20px;">X</div>
<div style="left:751.00px;top:72px;line-height:20px;height:20px;">X</div>
<div style="left:781.00px;top:72px;line-height:20px;height:20px;">X</div>
<div style="left:811.00px;top:72px;line-height:20px;height:20px;">X</div>
<div style="left:841.00px;top:72px;line-height:20px;height:20px;">X</div>
<div style="left:870.50px;top:72px;line-height:20px;height:20px;">V</div>
<div style="left:3.05px;top:86px;line-height:20px;height:20px;transform:scaleX(0.9471);transform-origin:0 0;">Normal</div>
<div style="left:257.80px;top:86px;line-height:20px;height:20px;transform:scaleX(0.9417);transform-origin:0 0;">0016</div>
<div style="left:300.50px;top:86px;line-height:20px;height:20px;">G</div>
<div style="left:331.00px;top:86px;line-height:20px;height:20px;">1</div>
<div style="left:361.50px;top:86px;line-height:20px;height:20px;">0</div>
<div style="left:391.00px;top:86px;line-height:20px;height:20px;">1</div>
<div style="left:421.50px;top:86px;line-height:20px;height:20px;">0</div>
<div style="left:451.00px;top:86px;line-height:20px;height:20px;">1</div>
<div style="left:481.50px;top:86px;line-height:20px;height:20px;">0</div>
<div style="left:511.00px;top:86px;line-height:20px;height:20px;">1</div>
<div style="left:541.50px;top:86px;line-height:20px;height:20px;">0</div>
<div style="left:571.00px;top:86px;line-height:20px;height:20px;">X</div>
<div style="left:601.00px;top:86px;line-height:20px;height:20px;">X</div>
<div style="left:631.00px;top:86px;line-height:20px;height:20px;">X</div>
<div style="left:661.00px;top:86px;line-height:20px;height:20px;">X</div>
<div style="left:691.00px;top:86px;line-height:20px;height:20px;">X</div>
<div style="left:721.00px;top:86px;line-height:20px;height:20px;">X</div>
<div style="left:751.00px;top:86px;line-height:20px;height:20px;">X</div>
<div style="left:781.00px;top:86px;line-height:20px;height:20px;">X</div>
<div style="left:811.00px;top:86px;line-height:20px;height:20px;">X</div>
<div style="left:841.00px;top:86px;line-height:20px;height:20px;">X</div>
<div style="left:870.50px;top:86px;line-height:20px;height:20px;">V</div>
<div style="left:3.05px;top:100px;line-height:20px;height:20px;transform:scaleX(0.9471);transform-origin:0 0;">Normal</div>
<div style="left:257.80px;top:100px;line-height:20px;height:20px;transform:scaleX(0.9417);transform-origin:0 0;">0017</div>
<div style="left:300.50px;top:100px;line-height:20px;height:20px;">G</div>
<div style="left:331.00px;top:100px;line-height:20px;height:20px;">X</div>
<div style="left:361.00px;top:100px;line-height:20px;height:20px;">X</div>
<div style="left:391.00px;top:100px;line-height:20px;height:20px;">X</div>
<div style="left:421.00px;top:100px;line-height:20px;height:20px;">X</div>
<div style="left:451.00px;top:100px;line-height:20px;height:20px;">X</div>
<div style="left:481.00px;top:100px;line-height:20px;height:20px;">X</div>
<div style="left:511.00px;top:100px;line-height:20px;height:20px;">X</div>
<div style="left:541.00px;top:100px;line-height:20px;height:20px;">X</div>
<div style="left:571.00px;top:100px;line-height:20px;height:20px;">X</div>
<div style="left:601.00px;top:100px;line-height:20px;height:20px;">X</div>
<div style="left:631.00px;top:100px;line-height:20px;height:20px;">X</div>
<div style="left:661.00px;top:100px;line-height:20px;height:20px;">X</div>
<div style="left:691.00px;top:100px;line-height:20px;height:20px;">X</div>
<div style="left:721.00px;top:100px;line-height:20px;height:20px;">X</div>
<div style="left:751.00px;top:100px;line-height:20px;height:20px;">X</div>
<div style="left:781.00px;top:100px;line-height:20px;height:20px;">X</div>
<div style="left:811.00px;top:100px;line-height:20px;height:20px;">X</div>
<div style="left:841.00px;top:100px;line-height:20px;height:20px;">X</div>
<div style="left:870.50px;top:100px;line-height:20px;height:20px;">V</div>
<div style="left:3.05px;top:114px;line-height:20px;height:20px;transform:scaleX(0.9471);transform-origin:0 0;">Normal</div>
<div style="left:257.80px;top:114px;line-height:20px;height:20px;transform:scaleX(0.9417);transform-origin:0 0;">0018</div>
<div style="left:300.50px;top:114px;line-height:20px;height:20px;">G</div>
<div style="left:331.00px;top:114px;line-height:20px;height:20px;">X</div>
<div style="left:361.00px;top:114px;line-height:20px;height:20px;">X</div>
<div style="left:391.00px;top:114px;line-height:20px;height:20px;">X</div>
<div style="left:421.00px;top:114px;line-height:20px;height:20px;">X</div>
<div style="left:451.00px;top:114px;line-height:20px;height:20px;">X</div>
<div style="left:481.00px;top:114px;line-height:20px;height:20px;">X</div>
<div style="left:511.00px;top:114px;line-height:20px;height:20px;">X</div>
<div style="left:541.00px;top:114px;line-height:20px;height:20px;">X</div>
<div style="left:571.00px;top:114px;line-height:20px;height:20px;">X</div>
<div style="left:601.00px;top:114px;line-height:20px;height:20px;">X</div>
<div style="left:631.00px;top:114px;line-height:20px;height:20px;">X</div>
<div style="left:661.00px;top:114px;line-height:20px;height:20px;">X</div>
<div style="left:691.00px;top:114px;line-height:20px;height:20px;">X</div>
<div style="left:721.00px;top:114px;line-height:20px;height:20px;">X</div>
<div style="left:751.00px;top:114px;line-height:20px;height:20px;">X</div>
<div style="left:781.00px;top:114px;line-height:20px;height:20px;">X</div>
<div style="left:811.00px;top:114px;line-height:20px;height:20px;">X</div>
<div style="left:841.00px;top:114px;line-height:20px;height:20px;">X</div>
<div style="left:870.50px;top:114px;line-height:20px;height:20px;">V</div>
<div style="left:3.05px;top:128px;line-height:20px;height:20px;transform:scaleX(0.9471);transform-origin:0 0;">Normal</div>
<div style="left:257.80px;top:128px;line-height:20px;height:20px;transform:scaleX(0.9417);transform-origin:0 0;">0019</div>
<div style="left:300.50px;top:128px;line-height:20px;height:20px;">G</div>
<div style="left:331.00px;top:128px;line-height:20px;height:20px;">X</div>
<div style="left:361.00px;top:128px;line-height:20px;height:20px;">X</div>
<div style="left:391.00px;top:128px;line-height:20px;height:20px;">X</div>
<div style="left:421.00px;top:128px;line-height:20px;height:20px;">X</div>
<div style="left:451.00px;top:128px;line-height:20px;height:20px;">X</div>
<div style="left:481.00px;top:128px;line-height:20px;height:20px;">X</div>
<div style="left:511.00px;top:128px;line-height:20px;height:20px;">X</div>
<div style="left:541.00px;top:128px;line-height:20px;height:20px;">X</div>
<div style="left:571.00px;top:128px;line-height:20px;height:20px;">X</div>
<div style="left:601.00px;top:128px;line-height:20px;height:20px;">X</div>
<div style="left:631.00px;top:128px;line-height:20px;height:20px;">X</div>
<div style="left:661.00px;top:128px;line-height:20px;height:20px;">X</div>
<div style="left:691.00px;top:128px;line-height:20px;height:20px;">X</div>
<div style="left:721.00px;top:128px;line-height:20px;height:20px;">X</div>
<div style="left:751.00px;top:128px;line-height:20px;height:20px;">X</div>
<div style="left:781.00px;top:128px;line-height:20px;height:20px;">X</div>
<div style="left:811.00px;top:128px;line-height:20px;height:20px;">X</div>
<div style="left:841.00px;top:128px;line-height:20px;height:20px;">X</div>
<div style="left:870.50px;top:128px;line-height:20px;height:20px;">V</div>
<div style="left:3.05px;top:142px;line-height:20px;height:20px;transform:scaleX(0.9471);transform-origin:0 0;">Normal</div>
<div style="left:257.80px;top:142px;line-height:20px;height:20px;transform:scaleX(0.9417);transform-origin:0 0;">0020</div>
<div style="left:300.50px;top:142px;line-height:20px;height:20px;">G</div>
<div style="left:331.00px;top:142px;line-height:20px;height:20px;">X</div>
<div style="left:361.00px;top:142px;line-height:20px;height:20px;">X</div>
<div style="left:391.00px;top:142px;line-height:20px;height:20px;">X</div>
<div style="left:421.00px;top:142px;line-height:20px;height:20px;">X</div>
<div style="left:451.00px;top:142px;line-height:20px;height:20px;">X</div>
<div style="left:481.00px;top:142px;line-height:20px;height:20px;">X</div>
<div style="left:511.00px;top:142px;line-height:20px;height:20px;">X</div>
<div style="left:541.00px;top:142px;line-height:20px;height:20px;">X</div>
<div style="left:571.00px;top:142px;line-height:20px;height:20px;">1</div>
<div style="left:601.50px;top:142px;line-height:20px;height:20px;">0</div>
<div style="left:631.00px;top:142px;line-height:20px;height:20px;">1</div>
<div style="left:661.50px;top:142px;line-height:20px;height:20px;">0</div>
<div style="left:691.00px;top:142px;line-height:20px;height:20px;">1</div>
<div style="left:721.50px;top:142px;line-height:20px;height:20px;">0</div>
<div style="left:751.00px;top:142px;line-height:20px;height:20px;">1</div>
<div style="left:781.50px;top:142px;line-height:20px;height:20px;">0</div>
<div style="left:811.50px;top:142px;line-height:20px;height:20px;">0</div>
<div style="left:841.00px;top:142px;line-height:20px;height:20px;">L</div>
<div style="left:870.50px;top:142px;line-height:20px;height:20px;">V</div>
<div style="left:4.00px;top:156px;line-height:20px;height:20px;letter-spacing:-0.146px;">All Vector Testing Normal</div>
<div style="left:888px;top:0;width:16px;height:201px;background:#f0f0f0"></div>
<div style="left:888px;top:87px;width:15px;height:78px;background:#cdcdcd"></div>
<svg style="left:891px;top:5px" width="9" height="7" viewBox="0 0 9 7"><path d="M1.5 5.7 L4.5 2.7 L7.5 5.7" stroke="#4d4d4d" stroke-width="2" fill="none"/></svg>
<svg style="left:891px;top:171px" width="9" height="7" viewBox="0 0 9 7"><path d="M1.5 1.3 L4.5 4.3 L7.5 1.3" stroke="#4d4d4d" stroke-width="2" fill="none"/></svg>
<div style="left:0;top:183px;width:905px;height:16px;background:#f0f0f0"></div>
<div style="left:17px;top:183px;width:508px;height:15px;background:#cdcdcd"></div>
<svg style="left:4px;top:186px" width="7" height="9" viewBox="0 0 7 9"><path d="M5.7 1.5 L2.7 4.5 L5.7 7.5" stroke="#4d4d4d" stroke-width="2" fill="none"/></svg>
<svg style="left:875.6px;top:186px" width="7" height="9" viewBox="0 0 7 9"><path d="M1.3 1.5 L4.3 4.5 L1.3 7.5" stroke="#4d4d4d" stroke-width="2" fill="none"/></svg>
</div></div>
<div style="left:22.30px;top:608px;line-height:20px;height:20px;letter-spacing:-0.048px;">Vector Table and Test Result</div>
<div style="left:635px;top:624px;width:286px;height:11px;border-top:1px solid #a0a0a0;border-left:1px solid #a0a0a0;border-right:1px solid #fff;border-bottom:1px solid #fff;background:#f0f0f0"></div>
</div></body></html>
